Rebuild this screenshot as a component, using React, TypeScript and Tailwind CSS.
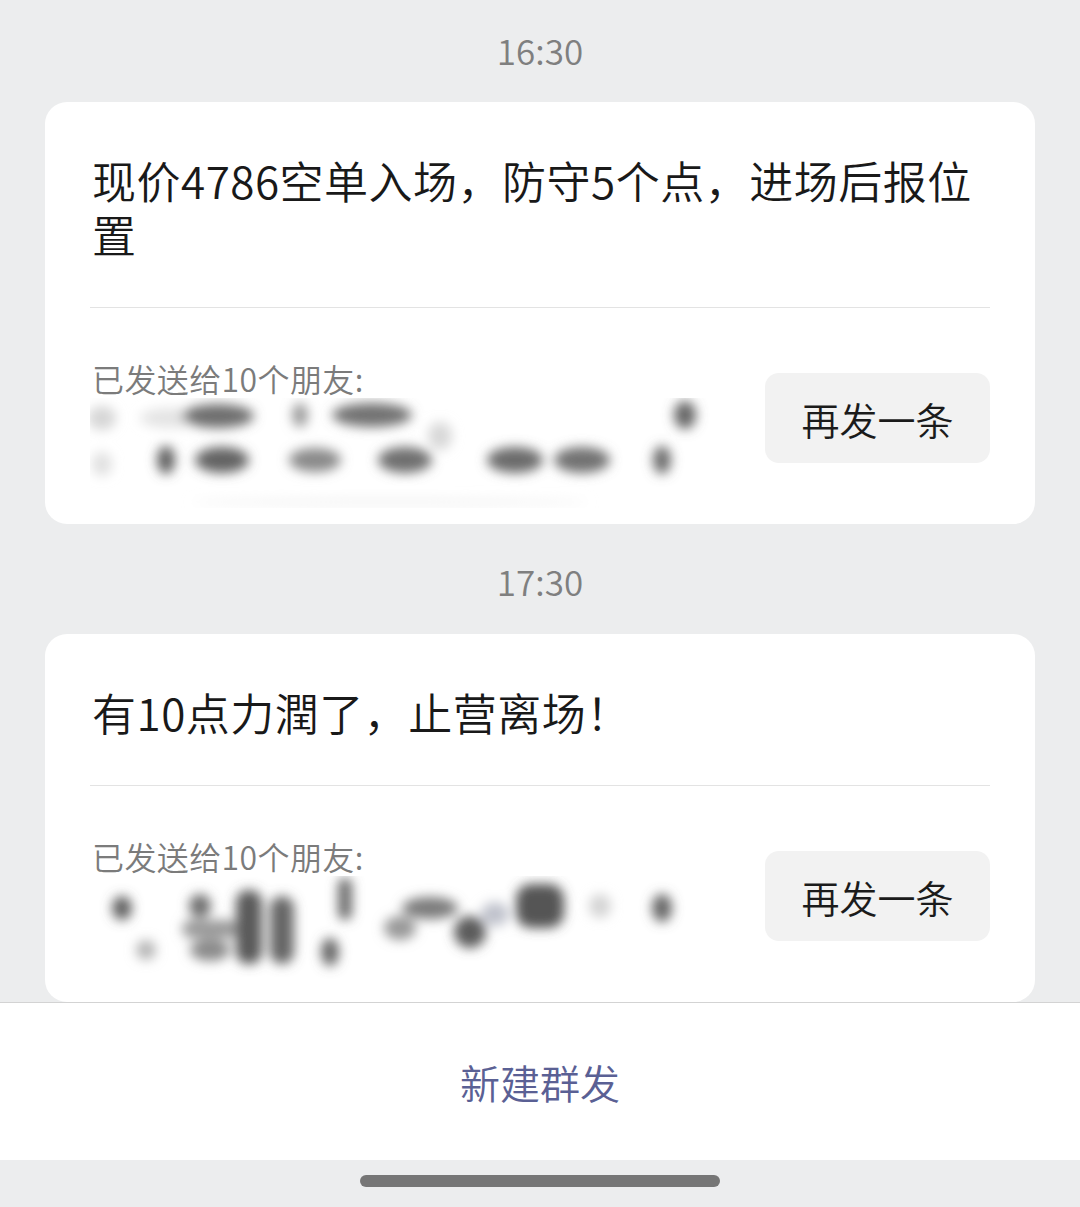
import React from 'react';

const BlurNames1: React.FC = () => (
  <svg width="650" height="110" viewBox="0 0 650 110" className="block">
    <defs>
      <filter id="b1" x="-20%" y="-50%" width="140%" height="200%">
        <feGaussianBlur stdDeviation="6" />
      </filter>
    </defs>
    <g filter="url(#b1)">
      <ellipse cx="12" cy="20" rx="14" ry="12" fill="#d6d6d6" />
      <ellipse cx="12" cy="66" rx="10" ry="12" fill="#e0e0e0" />
      <ellipse cx="80" cy="20" rx="30" ry="10" fill="#e4e4e4" />
      <ellipse cx="128" cy="18" rx="36" ry="12" fill="#6e6e6e" />
      <ellipse cx="210" cy="17" rx="8" ry="12" fill="#9a9a9a" />
      <ellipse cx="282" cy="17" rx="40" ry="12" fill="#727272" />
      <ellipse cx="350" cy="38" rx="12" ry="14" fill="#d8d8d8" />
      <ellipse cx="595" cy="17" rx="11" ry="14" fill="#666" />
      <ellipse cx="76" cy="62" rx="9" ry="14" fill="#5e5e5e" />
      <ellipse cx="132" cy="62" rx="27" ry="13" fill="#646464" />
      <ellipse cx="225" cy="62" rx="26" ry="12" fill="#8a8a8a" />
      <ellipse cx="315" cy="62" rx="27" ry="13" fill="#707070" />
      <ellipse cx="425" cy="62" rx="28" ry="13" fill="#6c6c6c" />
      <ellipse cx="492" cy="62" rx="28" ry="13" fill="#727272" />
      <ellipse cx="572" cy="62" rx="9" ry="14" fill="#6a6a6a" />
      <ellipse cx="300" cy="104" rx="200" ry="3" fill="#f0f0f0" />
    </g>
  </svg>
);

const BlurNames2: React.FC = () => (
  <svg width="650" height="110" viewBox="0 0 650 110" className="block">
    <defs>
      <filter id="b2" x="-20%" y="-50%" width="140%" height="200%">
        <feGaussianBlur stdDeviation="6" />
      </filter>
    </defs>
    <g filter="url(#b2)">
      <ellipse cx="32" cy="32" rx="10" ry="12" fill="#5e5e5e" />
      <ellipse cx="56" cy="74" rx="10" ry="10" fill="#b4b4b4" />
      <ellipse cx="110" cy="30" rx="11" ry="12" fill="#6e6e6e" />
      <rect x="92" y="44" width="56" height="18" rx="9" fill="#999" />
      <ellipse cx="120" cy="74" rx="20" ry="11" fill="#8a8a8a" />
      <rect x="146" y="14" width="26" height="74" rx="12" fill="#5a5a5a" />
      <rect x="180" y="20" width="24" height="68" rx="12" fill="#666" />
      <rect x="248" y="2" width="14" height="42" rx="7" fill="#6a6a6a" />
      <ellipse cx="240" cy="76" rx="9" ry="14" fill="#666" />
      <ellipse cx="310" cy="52" rx="16" ry="12" fill="#999" />
      <ellipse cx="340" cy="32" rx="28" ry="11" fill="#7c7c7c" />
      <ellipse cx="380" cy="56" rx="16" ry="16" fill="#5c5c5c" />
      <ellipse cx="405" cy="38" rx="14" ry="12" fill="#c0c2cc" />
      <rect x="426" y="8" width="48" height="44" rx="15" fill="#555" />
      <ellipse cx="510" cy="30" rx="11" ry="12" fill="#d4d4d4" />
      <ellipse cx="572" cy="32" rx="10" ry="14" fill="#666" />
    </g>
  </svg>
);

interface MassCardProps {
  text: string[];
  blur: React.ReactNode;
}

const MassCard: React.FC<MassCardProps> = ({ text, blur }) => (
  <div className="bg-white rounded-[22px] px-[45px] pt-[51px]">
    <div className="text-[44px] leading-[54px] text-[#191919] font-[350] tracking-[0.5px] pl-[2px]">
      {text.map((line, i) => (
        <div key={i}>{line}</div>
      ))}
    </div>
    <div className="mt-[46px] h-px bg-[#e3e3e3]" />
    <div className="h-[216px] flex items-start justify-between">
      <div className="pt-[50px]">
        <div className="text-[32px] leading-[40px] text-[#7b7b7b] font-[350] tracking-[0.4px] pl-[2px]">已发送给10个朋友:</div>
        {blur}
      </div>
      <button className="mt-[65px] w-[225px] h-[90px] rounded-[14px] bg-[#f2f2f2] text-[38px] font-[350] text-[#1b1b1b] flex items-center justify-center">
        再发一条
      </button>
    </div>
  </div>
);

const TimeLabel: React.FC<{ time: string; className: string }> = ({ time, className }) => (
  <div className={`text-center text-[35px] leading-[36px] font-[350] text-[#7f7f7f] ${className}`}>{time}</div>
);

export default function App() {
  return (
    <div className="w-[1080px] h-[1207px] bg-[#ecedee] flex flex-col font-['Noto_Sans_CJK_SC','Noto_Sans',sans-serif]">
      <div className="h-[1002px] overflow-hidden px-[45px]">
        <TimeLabel time="16:30" className="h-[102px] pt-[32px]" />
        <MassCard
          text={['现价4786空单入场，防守5个点，进场后报位置']}
          blur={<BlurNames1 />}
        />
        <TimeLabel time="17:30" className="h-[110px] pt-[39px]" />
        <MassCard text={['有10点力潤了，止营离场！']} blur={<BlurNames2 />} />
      </div>
      <div className="h-[158px] bg-white border-t border-[#d3d3d3] flex items-center justify-center">
        <span className="text-[40px] font-[350] text-[#5a6094]">新建群发</span>
      </div>
      <div className="flex-1 flex justify-center pt-[15px]">
        <div className="w-[360px] h-[12px] rounded-full bg-[#767676]" />
      </div>
    </div>
  );
}
